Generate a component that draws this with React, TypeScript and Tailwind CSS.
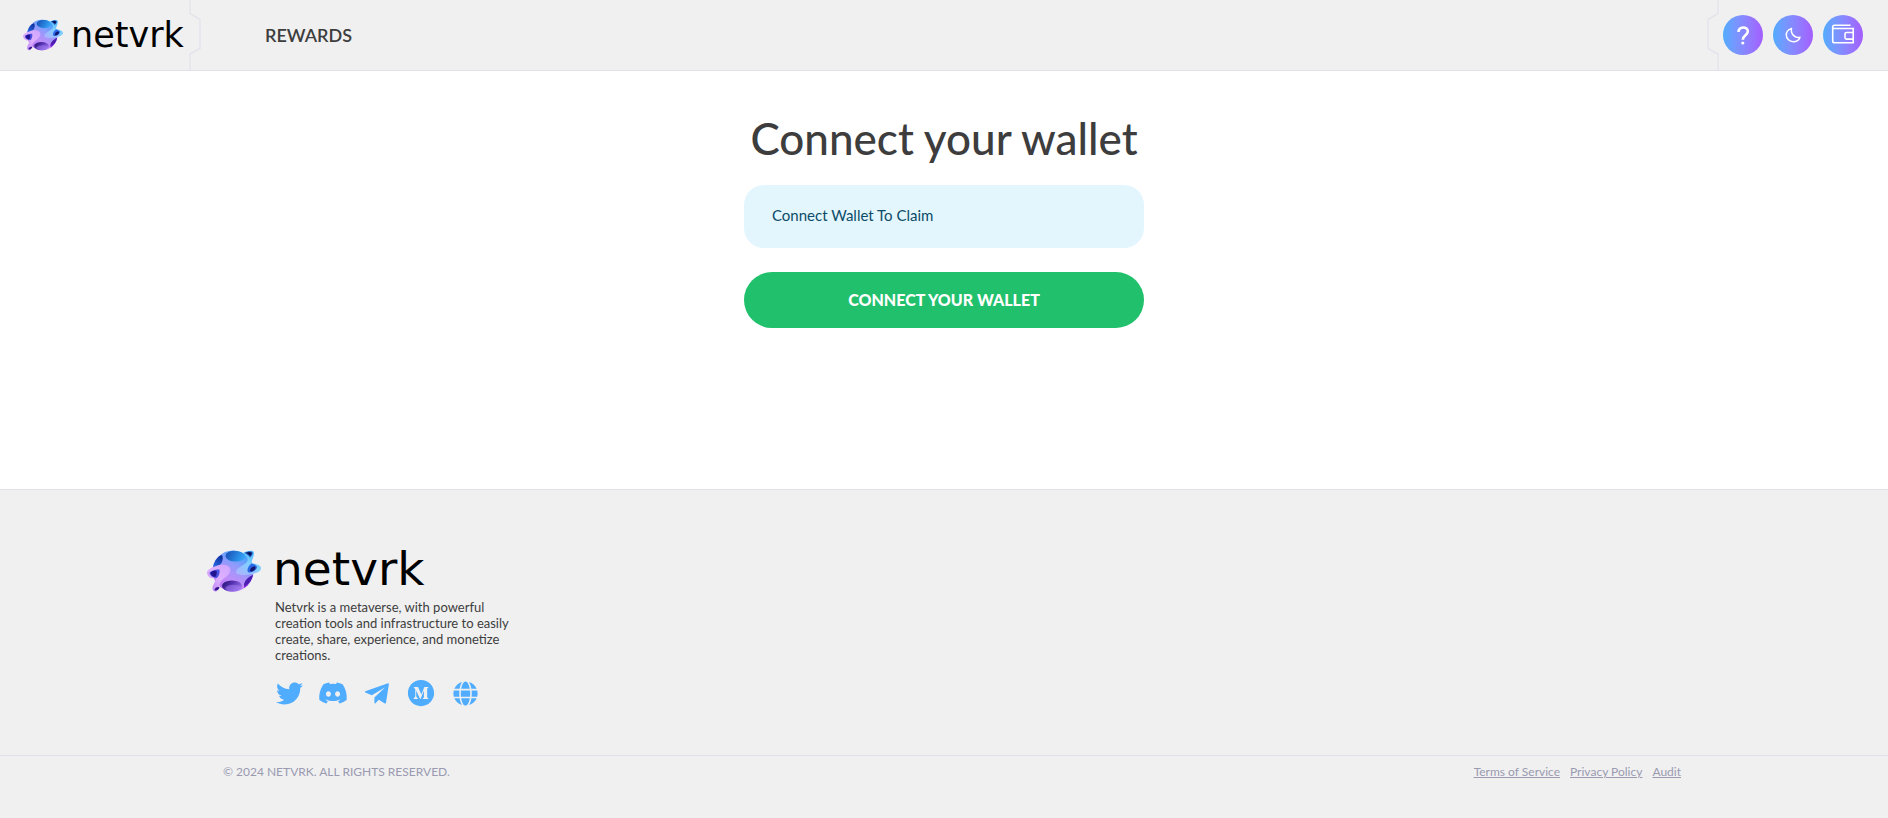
import { useId, type ReactNode } from "react";
import { FaDiscord, FaGlobe, FaTwitter } from "react-icons/fa";
import { AiFillMediumCircle } from "react-icons/ai";

function Planet({ className }: { className: string }) {
  const id = useId();
  const body = `${id}-body`;
  const blue = `${id}-blue`;
  const side = `${id}-side`;
  const violet = `${id}-violet`;
  const armLeft = `${id}-arm-left`;
  const armRight = `${id}-arm-right`;
  const ball = `${id}-ball`;
  return (
    <svg viewBox="0 0 54 42" className={className} aria-hidden="true">
      <defs>
        <linearGradient id={body} x1="0.75" y1="0.05" x2="0.3" y2="1">
          <stop offset="0" stopColor="#39a6ff" />
          <stop offset="0.35" stopColor="#8f9bfb" />
          <stop offset="0.7" stopColor="#c08df8" />
          <stop offset="1" stopColor="#b76bf5" />
        </linearGradient>
        <linearGradient id={blue} x1="0" y1="0.2" x2="1" y2="0.5">
          <stop offset="0" stopColor="#1a4fb5" />
          <stop offset="0.6" stopColor="#2784de" />
          <stop offset="1" stopColor="#35a5f8" />
        </linearGradient>
        <linearGradient id={side} x1="0.7" y1="0" x2="0.2" y2="1">
          <stop offset="0" stopColor="#0d2f9c" />
          <stop offset="1" stopColor="#2f76f5" />
        </linearGradient>
        <linearGradient id={violet} x1="0" y1="0.1" x2="1" y2="0.6">
          <stop offset="0" stopColor="#20106e" />
          <stop offset="0.5" stopColor="#5a35b5" />
          <stop offset="1" stopColor="#9a74ee" />
        </linearGradient>
        <linearGradient id={armLeft} x1="0.9" y1="0" x2="0.1" y2="1">
          <stop offset="0" stopColor="#cfa6ff" />
          <stop offset="0.5" stopColor="#dfb0ff" />
          <stop offset="1" stopColor="#b884f5" />
        </linearGradient>
        <linearGradient id={armRight} x1="0.8" y1="0" x2="0.2" y2="1">
          <stop offset="0" stopColor="#3fb2ff" />
          <stop offset="0.5" stopColor="#7fd0ff" />
          <stop offset="1" stopColor="#a9b4ff" />
        </linearGradient>
        <clipPath id={ball}>
          <circle cx="26" cy="21" r="20.500" />
        </clipPath>
      </defs>
      <circle cx="26" cy="21" r="20.500" fill={`url(#${body})`} />
      <g clipPath={`url(#${ball})`}>
        <ellipse cx="28.500" cy="6" rx="10" ry="5.500" fill={`url(#${blue})`} />
        <path d="M4 19C5 12 10 6 15 5c2 4 0 9-4 12-2 1-4 3-7 2Z" fill={`url(#${side})`} />
        <path d="M37 36c0-5 4-9 11-12 0 6-3 12-8 15-2 0-3-1-3-3Z" fill="#8a2be0" />
        <path d="M37 36c0-5 4-9 9-11-1 5-4 9-9 11Z" fill="#4a1fb0" />
      </g>
      <ellipse cx="25" cy="36" rx="10" ry="5.500" fill={`url(#${violet})`} />
      <path d="M18 38c4-4 11-4 16-1-1 3-5 4.500-9 4.500-3 0-6-1-7-3.500Z" fill="#a47df2" opacity="0.55" />
      <path
        d="M36 3c4-2 9-3 10.500-1.200C48 5 45 9 44.500 13c4 1 9 2 9.500 5 0 4-5 5-9 6-5 1-13 2-16-1-1-5 8-7 11-11 2-4-1-6-4-9Z"
        fill={`url(#${armRight})`}
      />
      <path d="M37.500 3c3-1.700 6.500-2 8-.8C46 4 44.500 6 43 7.500 42 5.500 40 4 37.500 3Z" fill="#1a46a8" />
      <path d="M39.500 3c2-1 4-1 5 0 .3 1-.5 2-1.500 2.600C42 4.500 41 3.500 39.500 3Z" fill="#080a4c" />
      <path d="M40.500 21c-.5-3 2-6 4-7.500 2.500.5 5 1.500 5.500 3.500-.5 3-4 5-7 5.500-1.500 0-2.200-.5-2.500-1.500Z" fill="#2c68e6" />
      <path d="M43 20.500c.3-2.500 2.500-4.500 5-4 1.500 1.500-.5 4-3 5-1.200.3-1.900-.1-2-1Z" fill="#14176f" />
      <path
        d="M0 23c0-4 6-6 12-8 5-1 11 0 11.500 4.500C23 26 16 28 13.500 32c-1 3-1 6-4 9.500C7 42 5 40 5.500 37.500 6 34 9 31 9 28c-3 1-8 0-9-5Z"
        fill={`url(#${armLeft})`}
      />
      <path d="M2.500 22.500c2-2 6-3.500 10-3C13 23 12 26 10 28c-3 0-7-1.500-7.500-5.500Z" fill="#4a50e0" />
      <path d="M3.500 22.500c1.500-1.500 4-2 6-1.500C10 23.500 9.500 26 8 27c-2.500-.5-4.500-2-4.500-4.500Z" fill="#221391" />
      <path d="M7.500 40.500c0-2.500 2-4 5-3.500 0 2-2 4-5 3.500Z" fill="#35128c" />
    </svg>
  );
}

function Notch({ className }: { className: string }) {
  return (
    <svg viewBox="0 0 12 70" className={className} fill="none" stroke="#e4e4ec" strokeWidth="1.500" aria-hidden="true">
      <path d="M1 0V13.500L11 19.500V48.500L1 54V70" />
    </svg>
  );
}

function RoundButton({ label, children }: { label: string; children: ReactNode }) {
  return (
    <button
      type="button"
      aria-label={label}
      className="flex size-10 items-center justify-center rounded-full bg-linear-to-r from-[#4facfe] to-[#a35dff] text-white"
    >
      {children}
    </button>
  );
}

function PaperPlane() {
  return (
    <svg viewBox="0 0 24 21" className="h-[21px] w-6" fill="currentColor" aria-hidden="true">
      <path d="M0.300 8.300 23 .2c.6-.2 1 .2.900.8L21 19.800c-.1.700-.6.900-1.200.6l-6-3.700-3.300 3.500c-.5.500-1.100.3-1.100-.4V14.500L20.300 4.200 6.800 12.300.400 9.500c-.6-.3-.6-.9-.1-1.200Z" />
    </svg>
  );
}

const socials = [
  { label: "Twitter", icon: <FaTwitter size={27} /> },
  { label: "Discord", icon: <FaDiscord size={30} className="shrink-0" /> },
  { label: "Telegram", icon: <PaperPlane /> },
  { label: "Medium", icon: <AiFillMediumCircle size={30} className="shrink-0" /> },
  { label: "Website", icon: <FaGlobe size={25} /> },
];

const legal = ["Terms of Service", "Privacy Policy", "Audit"];

export default function App() {
  return (
    <div className="flex min-h-screen flex-col bg-white font-['Lato',sans-serif] text-[#3d3d3d]">
      <header className="flex h-[71px] items-center border-b border-[#e1e1ea] bg-[#f0f0f0]">
        <a href="#home" aria-label="netvrk" className="flex items-center gap-2 pl-[23px] text-black">
          <Planet className="h-8 w-10" />
          <span className="w-[118px] font-['DejaVu_Sans',sans-serif] text-[35px] leading-9">netvrk</span>
        </a>
        <Notch className="h-[70px] w-3" />
        <nav className="pl-16">
          <a href="#rewards" className="text-lg font-semibold">REWARDS</a>
        </nav>
        <div className="ml-auto flex items-center pr-[25px]">
          <Notch className="h-[70px] w-3 -scale-x-100" />
          <div className="flex gap-[10px] pl-1">
            <RoundButton label="Help">
              <svg viewBox="0 0 40 40" className="size-10" fill="none" stroke="currentColor" strokeWidth="2.600">
                <path d="M15.500 17c0-2.700 1.900-4.500 4.600-4.500s4.700 1.600 4.700 4.100c0 3.500-5 4-5 8.100" />
                <circle cx="19.800" cy="28" r="1.600" fill="currentColor" stroke="none" />
              </svg>
            </RoundButton>
            <RoundButton label="Dark mode">
              <svg viewBox="0 0 40 40" className="size-10" fill="none" stroke="currentColor" strokeWidth="1.500" strokeLinejoin="round">
                <path d="M18.500 13.400c-3.200 1-5.200 3.600-5.200 6.600 0 3.800 3.100 6.700 7 6.700 3.100 0 5.700-1.700 6.700-4.500-4.900 1.300-9.700-3.200-8.500-8.800Z" />
              </svg>
            </RoundButton>
            <RoundButton label="Wallet">
              <svg viewBox="0 0 40 40" className="size-10" fill="none" stroke="currentColor" strokeWidth="1.600">
                <path d="M27.500 10.200H11.500c-1.200 0-1.800.8-1.800 1.800v14c0 1.200.8 1.800 1.800 1.800h18.700V13.500H10.500M30.200 17.500h-6.700c-1 0-1.500.6-1.500 1.500v3.500c0 1 .6 1.600 1.500 1.600h6.700" />
              </svg>
            </RoundButton>
          </div>
        </div>
      </header>

      <main className="flex flex-1 flex-col items-center px-4 pt-[38px]">
        <div className="flex w-full max-w-[400px] flex-col">
          <h1 className="text-center text-[44px] leading-[58px] font-medium whitespace-nowrap">Connect your wallet</h1>
          <p className="mt-[18px] rounded-[20px] bg-[#e4f6fd] px-7 pt-[19px] pb-[21px] text-[15px] leading-[23px] text-[#0b4b68]">
            Connect Wallet To Claim
          </p>
          <button type="button" className="mt-6 h-14 rounded-full bg-[#21c06c] text-base font-black text-white">
            CONNECT YOUR WALLET
          </button>
        </div>
      </main>

      <footer className="border-t border-[#e1e1ea] bg-[#f0f0f0] pt-[60px] pb-[38px]">
        <div className="mx-auto max-w-[1474px]">
          <a href="#home" aria-label="netvrk" className="flex items-center gap-3 text-black">
            <Planet className="h-[42px] w-[54px]" />
            <span className="pb-1 font-['DejaVu_Sans',sans-serif] text-[47px] leading-[38px]">netvrk</span>
          </a>
          <div className="pl-[68px]">
            <p className="mt-[7px] w-[250px] text-[13px] leading-4">
              Netvrk is a metaverse, with powerful creation tools and infrastructure to easily create, share, experience, and monetize creations.
            </p>
            <ul className="mt-4 flex gap-4 text-[#4facfe]">
              {socials.map((s) => (
                <li key={s.label}>
                  <a href="#social" aria-label={s.label} className="flex size-7 items-center justify-center">
                    {s.icon}
                  </a>
                </li>
              ))}
            </ul>
          </div>
        </div>
        <div className="mt-12 border-t border-[#e1e1ea] pt-2">
          <div className="mx-auto flex max-w-[1474px] justify-between pl-4 text-xs text-[#9a9ab0]">
            <p>© 2024 NETVRK. ALL RIGHTS RESERVED.</p>
            <ul className="flex gap-[10px]">
              {legal.map((item) => (
                <li key={item}>
                  <a href="#legal" className="underline">{item}</a>
                </li>
              ))}
            </ul>
          </div>
        </div>
      </footer>
    </div>
  );
}
